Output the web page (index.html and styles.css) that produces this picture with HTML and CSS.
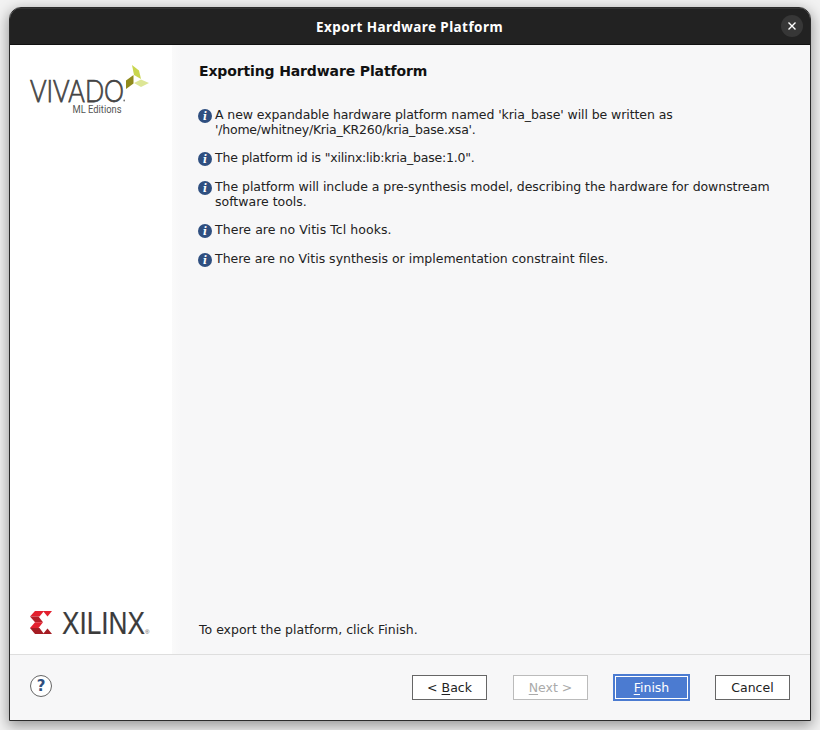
FILE: index.html
```html
<!DOCTYPE html>
<html lang="en">
<head>
<meta charset="utf-8">
<title>Export Hardware Platform</title>
<link rel="stylesheet" href="styles.css">
</head>
<body>
<div class="window">
  <header class="titlebar">
    <h1 class="title">Export Hardware Platform</h1>
    <button class="close" aria-label="Close"><svg width="10" height="10" viewBox="0 0 10 10"><path d="M1.500 1.500 8.500 8.500M8.500 1.500 1.500 8.500" stroke="#fff" stroke-width="1.4"/></svg></button>
  </header>
  <div class="main">
    <aside class="side">
      <svg class="vivado" width="122" height="54" viewBox="0 0 122 54">
        <text class="wordmark" x="0" y="36.500" textLength="94" lengthAdjust="spacingAndGlyphs">VIVADO</text>
        <circle cx="94.2" cy="35.500" r=".9" fill="#777"/>
        <text class="edition" x="42.5" y="48" textLength="49" lengthAdjust="spacingAndGlyphs">ML Editions</text>
        <path d="M102 0 109 5.500 111 14 104 10Z" fill="#c9d64e"/>
        <path d="M96 15.500 103.500 10V18.500L96 24Z" fill="#8f8a1c"/>
        <path d="M104 18 111 14.500 119 18 111 22Z" fill="#dde696"/>
      </svg>
      <svg class="xilinx" width="122" height="28" viewBox="0 0 122 28">
        <path d="M5 1H14L9.500 6.500H0Z" fill="#e3212f"/>
        <path d="M0 6.500H8.500L13 12.200H5Z" fill="#b51f28"/>
        <path d="M5 12.200H13L8.500 18H0Z" fill="#e3212f"/>
        <path d="M0 18H9.500L14 24H5Z" fill="#a51c23"/>
        <path d="M13 1H22L17.500 6.500Z" fill="#e3212f"/>
        <path d="M17.500 18.500 22 24H13Z" fill="#a51c23"/>
        <text class="xname" x="32" y="23.800" textLength="83" lengthAdjust="spacingAndGlyphs">XILINX</text>
        <text class="reg" x="115" y="24">®</text>
      </svg>
    </aside>
    <main class="content">
      <h2 class="heading">Exporting Hardware Platform</h2>
      <ul class="notes">
        <li><i class="info">i</i><p><span class="snug">A new expandable hardware platform named 'kria_base' will be written as</span><br><span class="tight">'/home/whitney/Kria_KR260/kria_base.xsa'.</span></p></li>
        <li><i class="info">i</i><p class="tight">The platform id is "xilinx:lib:kria_base:1.0".</p></li>
        <li><i class="info">i</i><p><span class="near">The platform will include a pre-synthesis model, describing the hardware for downstream</span><br>software tools.</p></li>
        <li><i class="info">i</i><p class="loose">There are no Vitis Tcl hooks.</p></li>
        <li><i class="info">i</i><p>There are no Vitis synthesis or implementation constraint files.</p></li>
      </ul>
      <p class="hint">To export the platform, click Finish.</p>
    </main>
  </div>
  <footer class="footer">
    <button class="help">?</button>
    <button class="btn">&lt; <u>B</u>ack</button>
    <button class="btn disabled" disabled><u>N</u>ext &gt;</button>
    <button class="btn primary"><u>F</u>inish</button>
    <button class="btn">Cancel</button>
  </footer>
</div>
</body>
</html>
```
FILE: styles.css
```css
* { box-sizing: border-box; }
body {
  margin: 0;
  height: 730px;
  padding: 7px 9px 9px;
  overflow: hidden;
  background: #f2f2f2;
  font: 12.5px/15px "DejaVu Sans", sans-serif;
  color: #222;
}
h1, h2, p, ul { margin: 0; padding: 0; }
button { font: inherit; color: inherit; padding: 0; }
.window {
  width: 802px;
  height: 714px;
  display: flex;
  flex-direction: column;
  border: 1px solid #2b2b2b;
  border-radius: 12px 12px 0 0;
  overflow: hidden;
  background: #f7f7f8;
  box-shadow: 0 4px 14px 1px rgba(0, 0, 0, .38);
}
.titlebar {
  height: 37px;
  display: grid;
  grid-template-columns: 30px 1fr 30px;
  align-items: center;
  flex: none;
  padding-right: 6px;
  background: #222;
  border-top: 1px solid #333;
  border-bottom: 1px solid #111;
  color: #fff;
}
.title {
  grid-column: 2;
  padding-left: 5px;
  text-align: center;
  font: bold 13.500px/18px "Noto Sans", sans-serif;
  letter-spacing: .43px;
}
.close {
  display: grid;
  place-items: center;
  justify-self: end;
  width: 22px;
  height: 22px;
  margin: 0 1px 2px 0;
  border: 0;
  border-radius: 50%;
  background: #373737;
}
.main { flex: 1; display: flex; }
.side {
  width: 162px;
  padding: 20px 0 16px 20px;
  display: flex;
  flex-direction: column;
  justify-content: space-between;
  background: #fff;
}
.side svg { overflow: visible; }
.wordmark { font: 300 31px Lato, sans-serif; fill: #444; stroke: #444; stroke-width: .75; }
.edition { font: 10px Roboto, sans-serif; fill: #555; }
.xname { font: 32px "Liberation Sans", sans-serif; fill: #3b3b3b; stroke: #3b3b3b; stroke-width: .2; }
.reg { font: 6px "Liberation Sans", sans-serif; fill: #555; }
.content {
  flex: 1;
  display: flex;
  flex-direction: column;
  padding: 17px 20px 17px 27px;
  background: linear-gradient(90deg, #fafafa, #f7f7f8 8px);
}
.heading { font-size: 14px; line-height: 18px; letter-spacing: -.13px; color: #111; }
.notes {
  list-style: none;
  display: flex;
  flex-direction: column;
  gap: 13.400px;
  margin-top: 27px;
}
.notes li { display: flex; gap: 3px; white-space: nowrap; }
.near { letter-spacing: -.055px; }
.snug { letter-spacing: -.085px; }
.tight { letter-spacing: -.21px; }
.loose { letter-spacing: .06px; }
.info {
  width: 14px;
  height: 14px;
  margin: 2px 0 -1px -1px;
  border-radius: 50%;
  background: #2f4f80;
  color: #fff;
  font: italic bold 10.500px/14px "DejaVu Serif", serif;
  text-align: center;
}
.hint { margin-top: auto; }
.footer {
  height: 66px;
  flex: none;
  display: flex;
  align-items: center;
  gap: 26px;
  padding: 0 20px;
  border-top: 1px solid #dedede;
}
.help {
  width: 22px;
  height: 22px;
  margin: -3px auto 0 0;
  border: 1px solid #666;
  border-radius: 50%;
  background: #fff;
  color: #2f4f80;
  font-weight: bold;
  font-size: 15px;
  line-height: 20px;
}
.btn {
  width: 75px;
  height: 25px;
  border: 1px solid #666;
  background: #fff;
}
.btn u { text-underline-offset: 2px; }
.btn.disabled { color: #aaa; border-color: #bbb; }
.btn.primary {
  width: 77px;
  height: 27px;
  margin: 0 -1px;
  border: 2px solid #4b7bd1;
  box-shadow: inset 0 0 0 1px #fff;
  background: #4b7bd1;
  color: #fff;
}
```
